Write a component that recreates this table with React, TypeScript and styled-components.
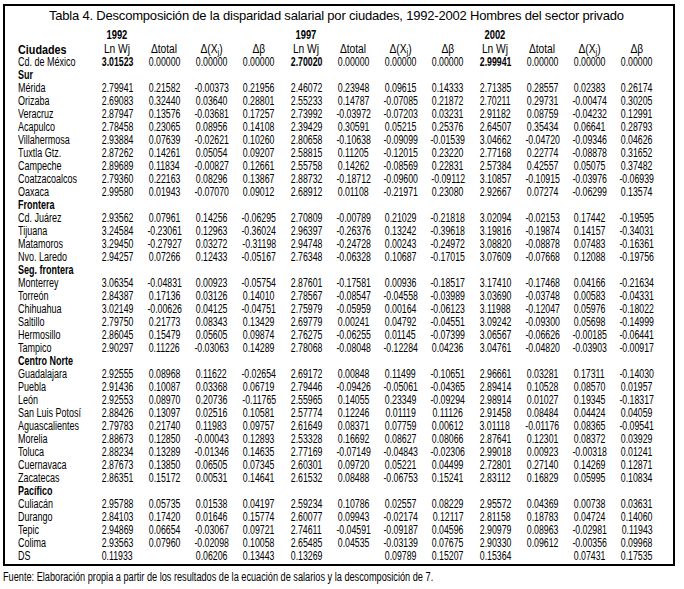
import styled, { createGlobalStyle, css } from "styled-components";

const YEARS = ["1992", "1997", "2002"];

// "_" marks an empty cell
const rawRows = `
Cd. de México|3.01523 0.00000 0.00000 0.00000 2.70020 0.00000 0.00000 0.00000 2.99941 0.00000 0.00000 0.00000
#Sur
Mérida|2.79941 0.21582 -0.00373 0.21956 2.46072 0.23948 0.09615 0.14333 2.71385 0.28557 0.02383 0.26174
Orizaba|2.69083 0.32440 0.03640 0.28801 2.55233 0.14787 -0.07085 0.21872 2.70211 0.29731 -0.00474 0.30205
Veracruz|2.87947 0.13576 -0.03681 0.17257 2.73992 -0.03972 -0.07203 0.03231 2.91182 0.08759 -0.04232 0.12991
Acapulco|2.78458 0.23065 0.08956 0.14108 2.39429 0.30591 0.05215 0.25376 2.64507 0.35434 0.06641 0.28793
Villahermosa|2.93884 0.07639 -0.02621 0.10260 2.80658 -0.10638 -0.09099 -0.01539 3.04662 -0.04720 -0.09346 0.04626
Tuxtla Gtz.|2.87262 0.14261 0.05054 0.09207 2.58815 0.11205 -0.12015 0.23220 2.77168 0.22774 -0.08878 0.31652
Campeche|2.89689 0.11834 -0.00827 0.12661 2.55758 0.14262 -0.08569 0.22831 2.57384 0.42557 0.05075 0.37482
Coatzacoalcos|2.79360 0.22163 0.08296 0.13867 2.88732 -0.18712 -0.09600 -0.09112 3.10857 -0.10915 -0.03976 -0.06939
Oaxaca|2.99580 0.01943 -0.07070 0.09012 2.68912 0.01108 -0.21971 0.23080 2.92667 0.07274 -0.06299 0.13574
#Frontera
Cd. Juárez|2.93562 0.07961 0.14256 -0.06295 2.70809 -0.00789 0.21029 -0.21818 3.02094 -0.02153 0.17442 -0.19595
Tijuana|3.24584 -0.23061 0.12963 -0.36024 2.96397 -0.26376 0.13242 -0.39618 3.19816 -0.19874 0.14157 -0.34031
Matamoros|3.29450 -0.27927 0.03272 -0.31198 2.94748 -0.24728 0.00243 -0.24972 3.08820 -0.08878 0.07483 -0.16361
Nvo. Laredo|2.94257 0.07266 0.12433 -0.05167 2.76348 -0.06328 0.10687 -0.17015 3.07609 -0.07668 0.12088 -0.19756
#Seg. frontera
Monterrey|3.06354 -0.04831 0.00923 -0.05754 2.87601 -0.17581 0.00936 -0.18517 3.17410 -0.17468 0.04166 -0.21634
Torreón|2.84387 0.17136 0.03126 0.14010 2.78567 -0.08547 -0.04558 -0.03989 3.03690 -0.03748 0.00583 -0.04331
Chihuahua|3.02149 -0.00626 0.04125 -0.04751 2.75979 -0.05959 0.00164 -0.06123 3.11988 -0.12047 0.05976 -0.18022
Saltillo|2.79750 0.21773 0.08343 0.13429 2.69779 0.00241 0.04792 -0.04551 3.09242 -0.09300 0.05698 -0.14999
Hermosillo|2.86045 0.15479 0.05605 0.09874 2.76275 -0.06255 0.01145 -0.07399 3.06567 -0.06626 -0.00185 -0.06441
Tampico|2.90297 0.11226 -0.03063 0.14289 2.78068 -0.08048 -0.12284 0.04236 3.04761 -0.04820 -0.03903 -0.00917
#Centro Norte
Guadalajara|2.92555 0.08968 0.11622 -0.02654 2.69172 0.00848 0.11499 -0.10651 2.96661 0.03281 0.17311 -0.14030
Puebla|2.91436 0.10087 0.03368 0.06719 2.79446 -0.09426 -0.05061 -0.04365 2.89414 0.10528 0.08570 0.01957
León|2.92553 0.08970 0.20736 -0.11765 2.55965 0.14055 0.23349 -0.09294 2.98914 0.01027 0.19345 -0.18317
San Luis Potosí|2.88426 0.13097 0.02516 0.10581 2.57774 0.12246 0.01119 0.11126 2.91458 0.08484 0.04424 0.04059
Aguascalientes|2.79783 0.21740 0.11983 0.09757 2.61649 0.08371 0.07759 0.00612 3.01118 -0.01176 0.08365 -0.09541
Morelia|2.88673 0.12850 -0.00043 0.12893 2.53328 0.16692 0.08627 0.08066 2.87641 0.12301 0.08372 0.03929
Toluca|2.88234 0.13289 -0.01346 0.14635 2.77169 -0.07149 -0.04843 -0.02306 2.99018 0.00923 -0.00318 0.01241
Cuernavaca|2.87673 0.13850 0.06505 0.07345 2.60301 0.09720 0.05221 0.04499 2.72801 0.27140 0.14269 0.12871
Zacatecas|2.86351 0.15172 0.00531 0.14641 2.61532 0.08488 -0.06753 0.15241 2.83112 0.16829 0.05995 0.10834
#Pacífico
Culiacán|2.95788 0.05735 0.01538 0.04197 2.59234 0.10786 0.02557 0.08229 2.95572 0.04369 0.00738 0.03631
Durango|2.84103 0.17420 0.01646 0.15774 2.60077 0.09943 -0.02174 0.12117 2.81158 0.18783 0.04724 0.14060
Tepic|2.94869 0.06654 -0.03067 0.09721 2.74611 -0.04591 -0.09187 0.04596 2.90979 0.08963 -0.02981 0.11943
Colima|2.93563 0.07960 -0.02098 0.10058 2.65485 0.04535 -0.03139 0.07675 2.90330 0.09612 -0.00356 0.09968
DS|0.11933 _ 0.06206 0.13443 0.13269 _ 0.09789 0.15207 0.15364 _ 0.07431 0.17535
`;

type TableRow =
  | { kind: "group"; label: string }
  | { kind: "city"; name: string; values: string[] };

const rows: TableRow[] = rawRows
  .trim()
  .split("\n")
  .map((line) => {
    if (line.startsWith("#")) return { kind: "group", label: line.slice(1) };
    const [name, nums] = line.split("|");
    return {
      kind: "city",
      name,
      values: nums.split(" ").map((v) => (v === "_" ? "" : v)),
    };
  });

export default function App() {
  return (
    <>
      <GlobalStyle />
      <Sheet>
        <TableFrame>
          <Title>
            Tabla 4. Descomposición de la disparidad salarial por ciudades,
            1992-2002 Hombres del sector privado
          </Title>

          <Row>
            <span />
            {YEARS.map((year) => (
              <YearGroup key={year}>
                <YearLabel>{year}</YearLabel>
                <span />
                <span />
                <span />
              </YearGroup>
            ))}
          </Row>

          <Row $height={14}>
            <HeadName>Ciudades</HeadName>
            {YEARS.map((year) => (
              <YearGroup key={year}>
                <HeadCell>Ln Wj</HeadCell>
                <HeadCell>Δtotal</HeadCell>
                <HeadCell>
                  Δ(X<Sub>j</Sub>)
                </HeadCell>
                <HeadCell>Δβ</HeadCell>
              </YearGroup>
            ))}
          </Row>

          {rows.map((row) =>
            row.kind === "group" ? (
              <Row key={row.label}>
                <GroupLabel>{row.label}</GroupLabel>
              </Row>
            ) : (
              <Row key={row.name}>
                <NameCell>{row.name}</NameCell>
                {row.values.map((value, i) => (
                  <NumCell
                    key={i}
                    $bold={row.name === "Cd. de México" && i % 4 === 0}
                  >
                    {value}
                  </NumCell>
                ))}
              </Row>
            )
          )}
        </TableFrame>

        <SourceNote>
          Fuente: Elaboración propia a partir de los resultados de la ecuación
          de salarios y la descomposición de 7.
        </SourceNote>
      </Sheet>
    </>
  );
}

// the scanned table uses a very condensed Arial; squeeze the glyphs horizontally
const condensed = (scale: number, origin = "left") => css`
  display: inline-block;
  font-family: "Liberation Sans", Arial, sans-serif;
  line-height: 13px;
  white-space: nowrap;
  transform: scaleX(${scale});
  transform-origin: ${origin} center;
`;

const GlobalStyle = createGlobalStyle`
  html, body {
    margin: 0;
    padding: 0;
    background: #fff;
  }

  body {
    color: #000;
    font-family: "Liberation Sans", Arial, sans-serif;
  }
`;

const Sheet = styled.main`
  width: 684px;
  height: 589px;
  box-sizing: border-box;
  padding: 4px 0 0 3px;
`;

const TableFrame = styled.section`
  width: 672px;
  height: 562px;
  box-sizing: border-box;
  border: 2px solid #000;
  padding-left: 13px;
`;

const Title = styled.h1`
  margin: 0 0 3px;
  padding-left: 31px;
  font-size: 13px;
  font-weight: 400;
  letter-spacing: -0.2px;
  line-height: 20px;
  white-space: nowrap;
`;

const Row = styled.div<{ $height?: number }>`
  display: grid;
  grid-template-columns: 75.5px repeat(12, 47.25px);
  height: ${({ $height = 13 }) => $height}px;
  align-items: center;
`;

const YearGroup = styled.div`
  display: contents;
`;

const NameCell = styled.span`
  ${condensed(0.72)}
  justify-self: start;
  font-size: 12.5px;
`;

const GroupLabel = styled.span`
  ${condensed(0.72)}
  grid-column: 1 / -1;
  justify-self: start;
  font-size: 12.5px;
  font-weight: 700;
`;

const HeadName = styled.span`
  ${condensed(0.8)}
  justify-self: start;
  font-size: 13.5px;
  font-weight: 700;
`;

const YearLabel = styled.span`
  ${condensed(0.75, "center")}
  justify-self: center;
  font-size: 12.5px;
  font-weight: 700;
`;

const HeadCell = styled.span`
  ${condensed(0.82, "center")}
  justify-self: center;
  font-size: 12.5px;
`;

const Sub = styled.sub`
  font-size: 9px;
  line-height: 0;
  vertical-align: -2px;
`;

const NumCell = styled.span<{ $bold?: boolean }>`
  ${condensed(0.7, "center")}
  justify-self: center;
  font-size: 12.5px;
  font-weight: ${({ $bold }) => ($bold ? 700 : 400)};
`;

const SourceNote = styled.p`
  ${condensed(0.765)}
  margin: 5px 0 0;
  font-size: 12px;
`;
